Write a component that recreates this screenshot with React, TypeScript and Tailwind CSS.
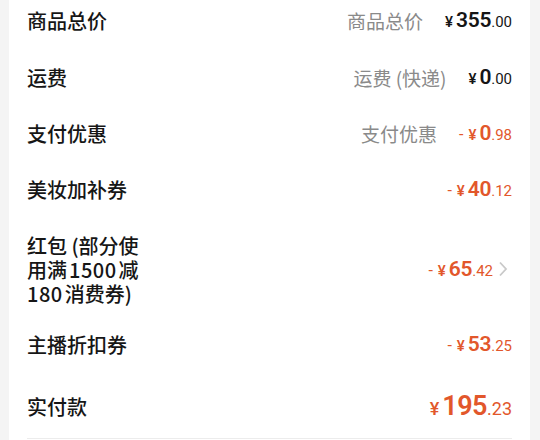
import React from "react";

type Row = {
    label: React.ReactNode[];
    sub?: string;
    sign?: boolean;
    int: string;
    dec: string;
    orange?: boolean;
    chevron?: boolean;
    mt: string;
};

const rows: Row[] = [
    { label: ["商品总价"], sub: "商品总价", int: "355", dec: ".00", mt: "mt-[9px]" },
    { label: ["运费"], sub: "运费 (快递)", int: "0", dec: ".00", mt: "mt-[33px]" },
    { label: ["支付优惠"], sub: "支付优惠", sign: true, int: "0", dec: ".98", orange: true, mt: "mt-[32px]" },
    { label: ["美妆加补券"], sign: true, int: "40", dec: ".12", orange: true, mt: "mt-[32px]" },
    {
        label: [
            "红包 (部分使",
            <>用满<span className="mx-[2px] tracking-[0.5px]">1500</span>减</>,
            <><span className="mr-[2px] tracking-[0.5px]">180</span>消费券)</>,
        ],
        sign: true,
        int: "65",
        dec: ".42",
        orange: true,
        chevron: true,
        mt: "mt-[32px]",
    },
    { label: ["主播折扣券"], sign: true, int: "53", dec: ".25", orange: true, mt: "mt-[27px]" },
];

function Chevron() {
    return (
        <svg width="10" height="16" viewBox="0 0 10 16" className="ml-[5px] mr-[4px] mb-[2px]">
            <path d="M2 1.5 L8 8 L2 14.5" fill="none" stroke="#c9c9c9" strokeWidth="1.8" />
        </svg>
    );
}

function Amount({ row }: { row: Row }) {
    const color = row.orange ? "text-[#e2572b]" : "text-[#151515]";
    return (
        <div className={`flex items-baseline leading-[24px] ${color} font-['Roboto',sans-serif]`}>
            {row.sign && <span className="text-[16px] mr-[5px]">-</span>}
            <span className="text-[15px] font-medium mr-[3px]">¥</span>
            <span className="text-[21px] font-semibold tracking-[-0.3px]">{row.int}</span>
            <span className="text-[15px]">{row.dec}</span>
        </div>
    );
}

export default function App() {
    return (
        <div className="w-[540px] h-[440px] bg-[#f4f4f4] overflow-hidden font-['Noto_Sans_CJK_SC',sans-serif]">
            <div className="ml-[9px] w-[521px] h-[440px] bg-white px-[18px] flex flex-col">
                {rows.map((row, i) => (
                    <div key={i} className={`flex items-center justify-between ${row.mt}`}>
                        <div className="text-[20px] leading-[24px] font-medium text-[#161616]">
                            {row.label.map((l, j) => (
                                <div key={j} className="h-[24px]">{l}</div>
                            ))}
                        </div>
                        <div className="flex items-center h-[24px]">
                            {row.sub && (
                                <span className="text-[19px] leading-[24px] text-[#8a8a8a] mr-[22px]">
                                    {row.sub}
                                </span>
                            )}
                            <Amount row={row} />
                            {row.chevron && <Chevron />}
                        </div>
                    </div>
                ))}
                <div className="flex items-center justify-between mt-[38px] h-[24px]">
                    <div className="text-[20px] leading-[24px] font-medium text-[#161616]">实付款</div>
                    <div className="flex items-baseline leading-[24px] text-[#e2572b] font-['Roboto',sans-serif]">
                        <span className="text-[18px] font-medium mr-[3px]">¥</span>
                        <span className="text-[27px] font-semibold tracking-[-0.5px]">195</span>
                        <span className="text-[18px]">.23</span>
                    </div>
                </div>
                <div className="mt-[19px] h-px bg-[#ececec]" />
            </div>
        </div>
    );
}
